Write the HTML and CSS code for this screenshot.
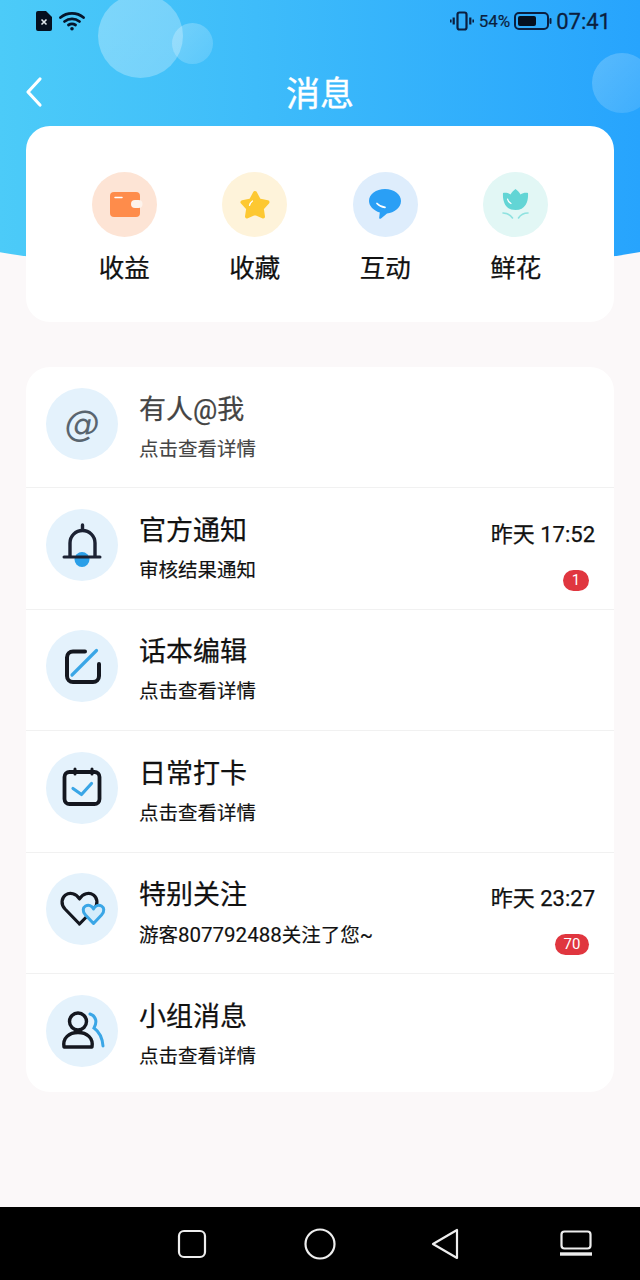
FILE: index.html
```html
<!doctype html>
<html lang="zh-CN">
<head>
  <meta charset="utf-8">
  <title>消息</title>
  <meta name="viewport" content="width=device-width, initial-scale=1">
  <link rel="stylesheet" href="styles.css">
</head>

<body>
  <div class="hero">
    <div class="bubble bubble-big"></div>
    <div class="bubble bubble-small"></div>
    <div class="bubble bubble-right"></div>
  </div>

  <main class="page">
    <div class="status">
      <div class="status-left">
        <svg width="16" height="20" viewBox="0 0 16 20"><path d="M2 0H10L16 6V18a2 2 0 0 1-2 2H2a2 2 0 0 1-2-2V2a2 2 0 0 1 2-2Z" fill="#05101f"/><path d="M5.5 8.5l5 5M10.500 8.500l-5 5" stroke="#dfe8ee" stroke-width="1.600"/></svg>
        <svg width="26" height="20" viewBox="0 0 26 20" fill="none" stroke="#05152b" stroke-width="2.800" stroke-linecap="round"><path d="M1.500 6.500C8 1 18 1 24.500 6.500"/><path d="M5.500 10.500C10 7 16 7 20.500 10.500"/><path d="M9.500 14C11.500 12.700 14.500 12.700 16.500 14"/><circle cx="13" cy="17.800" r="1.800" fill="#05152b" stroke="none"/></svg>
      </div>
      <div class="status-right">
        <svg width="24" height="20" viewBox="0 0 24 20" fill="none" stroke="#0b1f3f"><rect x="7.500" y="1.500" width="9" height="17" rx="2" stroke-width="2.200"/><path d="M3.700 6.500v7M20.300 6.500v7" stroke-width="2.200"/><path d="M.8 8.500v3M23.200 8.500v3" stroke-width="1.600"/></svg>
        <span class="batt-text">54%</span>
        <svg class="batt" width="38" height="18" viewBox="0 0 38 18" fill="none"><rect x="1" y="1" width="33" height="16" rx="4" stroke="#0b1f3f" stroke-width="2"/><rect x="4" y="4" width="18" height="10" rx="2" fill="#05101f"/><path d="M36.500 7v4" stroke="#0b1f3f" stroke-width="2" stroke-linecap="round"/></svg>
        <span class="clock">07:41</span>
      </div>
    </div>

    <header class="titlebar">
      <svg class="back" width="18" height="32" viewBox="0 0 18 32" fill="none"><path d="M15 3L3 16L15 29" stroke="#fff" stroke-width="3.200" stroke-linecap="round" stroke-linejoin="round"/></svg>
      <h1>消息</h1>
    </header>

    <section class="card tabs">
      <div class="tab">
        <svg width="65" height="65" viewBox="0 0 65 65">
          <circle cx="32.500" cy="32.500" r="32.500" fill="#fde4d5"/>
          <rect x="18" y="20" width="30" height="25" rx="4" fill="#fe8c4b"/>
          <rect x="39" y="28" width="11.500" height="8" rx="4" fill="#fdf3ec"/>
          <path d="M23 25.500h7" stroke="#fff" stroke-width="1.500" stroke-linecap="round"/>
        </svg>
        <span>收益</span>
      </div>
      <div class="tab">
        <svg width="65" height="65" viewBox="0 0 65 65">
          <circle cx="32.500" cy="32.500" r="32.500" fill="#fef3da"/>
          <path d="M33 21L37 28.500L45.500 30.200L39.800 36.500L41 44.500L33 41L25 44.500L26.200 36.500L20.500 30.200L29 28.500Z" fill="#fdc832" stroke="#fdc832" stroke-width="4" stroke-linejoin="round"/>
          <path d="M27.500 33.500C28 31.500 29 30 30.500 29" stroke="#fff" stroke-width="1.200" fill="none" stroke-linecap="round"/>
        </svg>
        <span>收藏</span>
      </div>
      <div class="tab">
        <svg width="65" height="65" viewBox="0 0 65 65">
          <circle cx="32.500" cy="32.500" r="32.500" fill="#deedfc"/>
          <path d="M32 17C41 17 48 22.300 48 29C48 35.700 41 41 34 41.500L28 46.500C26.800 47.200 26 46.500 26.200 45.500L26.800 40.500C20.500 38.500 16 34 16 29C16 22.300 23 17 32 17Z" fill="#2a9ff5"/>
          <path d="M24 31.500C26 33.800 29 35 32 35.300" stroke="#fff" stroke-width="1.700" fill="none" stroke-linecap="round"/>
        </svg>
        <span>互动</span>
      </div>
      <div class="tab">
        <svg width="65" height="65" viewBox="0 0 65 65">
          <circle cx="32.500" cy="32.500" r="32.500" fill="#e2f7f5"/>
          <path d="M32.500 17C34.500 18.500 36.500 20.500 37.500 22.500C39.500 21 42.500 20.500 45 21C45.500 28 43.500 38 32.500 38C21.500 38 19.500 28 20 21C22.500 20.500 25.500 21 27.500 22.500C28.500 20.500 30.500 18.500 32.500 17Z" fill="#62d5d5"/>
          <path d="M20 41C24 41 27.500 43 29.500 46M45 41C41 41 37.500 43 35.500 46" stroke="#8fe2e0" stroke-width="1.600" fill="none" stroke-linecap="round"/>
          <path d="M24.500 27C25 29 26 30.500 28 31.500" stroke="#fff" stroke-width="1.200" fill="none" stroke-linecap="round"/>
        </svg>
        <span>鲜花</span>
      </div>
    </section>

    <section class="card list">
      <div class="row row-muted">
        <div class="avatar"><span class="at">@</span></div>
        <div class="row-text">
          <div class="row-title">有人@我</div>
          <div class="row-sub">点击查看详情</div>
        </div>
      </div>

      <div class="row">
        <div class="avatar">
          <svg width="72" height="72" viewBox="0 0 72 72" fill="none">
            <path d="M24 47V34a12.500 12.500 0 0 1 25 0V47" stroke="#1c2233" stroke-width="3.400"/>
            <path d="M36.500 16v5" stroke="#1c2233" stroke-width="3.400" stroke-linecap="round"/>
            <circle cx="36" cy="50.500" r="7.500" fill="#2a9fe8"/>
            <path d="M18 48H54" stroke="#1c2233" stroke-width="3" stroke-linecap="round"/>
          </svg>
        </div>
        <div class="row-text">
          <div class="row-title">官方通知</div>
          <div class="row-sub">审核结果通知</div>
        </div>
        <div class="row-meta">
          <div class="row-time">昨天 17:52</div>
          <div class="badge">1</div>
        </div>
      </div>

      <div class="row">
        <div class="avatar">
          <svg width="72" height="72" viewBox="0 0 72 72" fill="none" stroke-linecap="round">
            <path d="M39 21.500H27a6 6 0 0 0-6 6V46a6 6 0 0 0 6 6H47a6 6 0 0 0 6-6V34" stroke="#14171f" stroke-width="4"/>
            <path d="M26 45L50.500 20.500" stroke="#3aa6e6" stroke-width="3.200"/>
          </svg>
        </div>
        <div class="row-text">
          <div class="row-title">话本编辑</div>
          <div class="row-sub">点击查看详情</div>
        </div>
      </div>

      <div class="row">
        <div class="avatar">
          <svg width="72" height="72" viewBox="0 0 72 72" fill="none" stroke-linecap="round" stroke-linejoin="round">
            <rect x="18.500" y="20" width="35" height="32" rx="5" fill="#eaf5fc" stroke="#14171f" stroke-width="3.800"/>
            <path d="M29 17V22M46 17V22" stroke="#14171f" stroke-width="3"/>
            <path d="M27 36.500L35.500 42.500L45.500 31.500" stroke="#3aa6e6" stroke-width="3.200"/>
          </svg>
        </div>
        <div class="row-text">
          <div class="row-title">日常打卡</div>
          <div class="row-sub">点击查看详情</div>
        </div>
      </div>

      <div class="row">
        <div class="avatar">
          <svg width="72" height="72" viewBox="0 0 72 72" fill="none" stroke-linejoin="round">
            <path d="M33.500 51L19 36C14.500 31 15.500 25 19.500 22C24 19 30 20.500 33.500 26C37 20.500 43 19 47.500 22C51.500 25 52.500 31 48 36Z" stroke="#14171f" stroke-width="3.200"/>
            <path d="M47.500 50.500L39.500 42C36 38 37 34.500 39.500 33C42.500 31.500 46 32.500 47.500 36C49 32.500 52.500 31.500 55.500 33C58 34.500 59 38 55.500 42Z" fill="#d4ecfb" stroke="#3aa6e6" stroke-width="3"/>
          </svg>
        </div>
        <div class="row-text">
          <div class="row-title">特别关注</div>
          <div class="row-sub">游客<span class="digits">807792488</span>关注了您~</div>
        </div>
        <div class="row-meta">
          <div class="row-time">昨天 23:27</div>
          <div class="badge badge-wide">70</div>
        </div>
      </div>

      <div class="row">
        <div class="avatar">
          <svg width="72" height="72" viewBox="0 0 72 72" fill="none" stroke-linecap="round">
            <circle cx="32" cy="26.500" r="8.500" stroke="#14171f" stroke-width="3.400"/>
            <path d="M18 52C16.500 43 23 37.500 32 37.500C41 37.500 47.500 43 46 52Z" stroke="#14171f" stroke-width="3.400" stroke-linejoin="round"/>
            <path d="M44 19C50 21 51.500 27 48 33C53.500 37 56.500 44 57 51" stroke="#3aa6e6" stroke-width="3"/>
          </svg>
        </div>
        <div class="row-text">
          <div class="row-title">小组消息</div>
          <div class="row-sub">点击查看详情</div>
        </div>
      </div>
    </section>
  </main>

  <nav class="navbar">
    <div class="nav-item">
      <svg width="30" height="30" viewBox="0 0 30 30" fill="none" stroke="#eee" stroke-width="2.200"><rect x="2" y="2" width="26" height="26" rx="5"/></svg>
    </div>
    <div class="nav-item">
      <svg width="32" height="32" viewBox="0 0 32 32" fill="none" stroke="#eee" stroke-width="2.200"><circle cx="16" cy="16" r="14.500"/></svg>
    </div>
    <div class="nav-item">
      <svg class="nav-back" width="28" height="32" viewBox="0 0 28 32" fill="none" stroke="#eee" stroke-width="2.200" stroke-linejoin="round"><path d="M26 2V30L2 16Z"/></svg>
    </div>
    <div class="nav-item">
      <svg width="32" height="28" viewBox="0 0 32 28" fill="none" stroke="#eee"><rect x="1.500" y="1.500" width="29" height="17" rx="3" stroke-width="2.200"/><path d="M0 24H32" stroke-width="3.400"/></svg>
    </div>
  </nav>
</body>
</html>
```
FILE: styles.css
```css
* {
  box-sizing: border-box;
}
body {
  margin: 0;
  height: 1280px;
  overflow: hidden;
  display: flex;
  flex-direction: column;
  background: #fbf8f9;
  font-family: Roboto, "Noto Sans CJK SC", sans-serif;
  color: #111;
}

/* blue curved header, sits behind the first card */
.hero {
  position: absolute;
  top: 0;
  left: 0;
  width: 640px;
  height: 280px;
  overflow: hidden;
  background: linear-gradient(90deg, #4ccbf8 0%, #3ebcfa 40%, #27a4fd 100%);
  clip-path: circle(2000px at 320px -1722px);
}
.bubble {
  position: absolute;
  border-radius: 50%;
}
.bubble-big {
  left: 98px;
  top: -6px;
  width: 85px;
  height: 84px;
  background: linear-gradient(135deg, rgba(255,255,255,.3), rgba(255,255,255,.26));
}
.bubble-small {
  left: 172px;
  top: 23px;
  width: 41px;
  height: 41px;
  background: linear-gradient(135deg, rgba(255,255,255,.26), rgba(255,255,255,.14));
}
.bubble-right {
  left: 592px;
  top: 53px;
  width: 60px;
  height: 60px;
  background: linear-gradient(135deg, rgba(255,255,255,.22), rgba(255,255,255,.1));
}

.page {
  position: relative;
  flex: 1;
  padding: 0 26px;
}

.status {
  height: 42px;
  margin: 0 3px 0 10px;
  display: flex;
  align-items: center;
  justify-content: space-between;
  color: #0b1f3f;
}
.status-left,
.status-right {
  display: flex;
  align-items: center;
}
.status-left {
  gap: 7px;
}
.batt-text {
  font-size: 17px;
  margin: 0 4px 0 5px;
  -webkit-text-stroke: .2px;
}
.clock {
  font-size: 22px;
  margin-left: 4px;
  -webkit-text-stroke: .3px;
}

.titlebar {
  height: 84px;
  padding-top: 14px;
  margin: 0 -26px;
  display: flex;
  align-items: center;
  justify-content: center;
  position: relative;
}
.titlebar h1 {
  margin: 0;
  font-size: 34px;
  font-weight: 400;
  color: #fff;
  -webkit-text-stroke: .4px;
}
.back {
  position: absolute;
  left: 25px;
  top: 34px;
}

.card {
  background: #fff;
  border-radius: 24px;
}

.tabs {
  height: 196px;
  padding: 46px 33px 0;
  display: grid;
  grid-template-columns: repeat(4, 1fr);
}
.tab {
  display: flex;
  flex-direction: column;
  align-items: center;
}
.tab svg {
  display: block;
}
.tab span {
  margin-top: 12px;
  font-size: 25.500px;
  line-height: 38px;
  -webkit-text-stroke: .25px;
}

.list {
  height: 725px;
  margin-top: 45px;
  overflow: hidden;
}
.row {
  height: 121.4px;
  padding: 20.6px 19px 0 20px;
  display: flex;
  align-items: flex-start;
  border-bottom: 1px solid #f1f1f1;
}
.row:last-child {
  border-bottom: 0;
}
.avatar {
  width: 72px;
  height: 72px;
  flex: none;
  border-radius: 50%;
  background: #e4f2fc;
  display: flex;
  align-items: center;
  justify-content: center;
}
.avatar svg {
  display: block;
}
.at {
  font-family: "DejaVu Sans", sans-serif;
  font-size: 35px;
  font-style: italic;
  color: #59656f;
}
.row-text {
  margin: 1px 0 0 21px;
}
.row-title {
  font-size: 27px;
  line-height: 42px;
  -webkit-text-stroke: .25px;
}
.row-sub {
  font-size: 19.500px;
  line-height: 38px;
  -webkit-text-stroke: .15px;
}
.digits {
  font-size: 20.500px;
}
.row-muted .row-title,
.row-muted .row-sub {
  color: #444;
}
.row-meta {
  margin-left: auto;
  display: flex;
  flex-direction: column;
  align-items: flex-end;
}
.row-time {
  font-size: 22px;
  line-height: 52px;
  -webkit-text-stroke: .25px;
}
.badge {
  margin: 9px 6px 0 0;
  min-width: 26px;
  height: 21px;
  padding: 0 4px;
  border-radius: 11px;
  background: #e0363f;
  color: #fff;
  font-size: 15px;
  line-height: 21px;
  text-align: center;
}
.badge-wide {
  min-width: 34px;
}

.navbar {
  height: 73px;
  flex: none;
  padding-left: 128px;
  background: #000;
  display: flex;
  align-items: center;
}
.nav-item {
  width: 128px;
  display: flex;
  justify-content: center;
}
.nav-item svg {
  display: block;
}
.nav-back {
  margin-left: -7px;
}
```
